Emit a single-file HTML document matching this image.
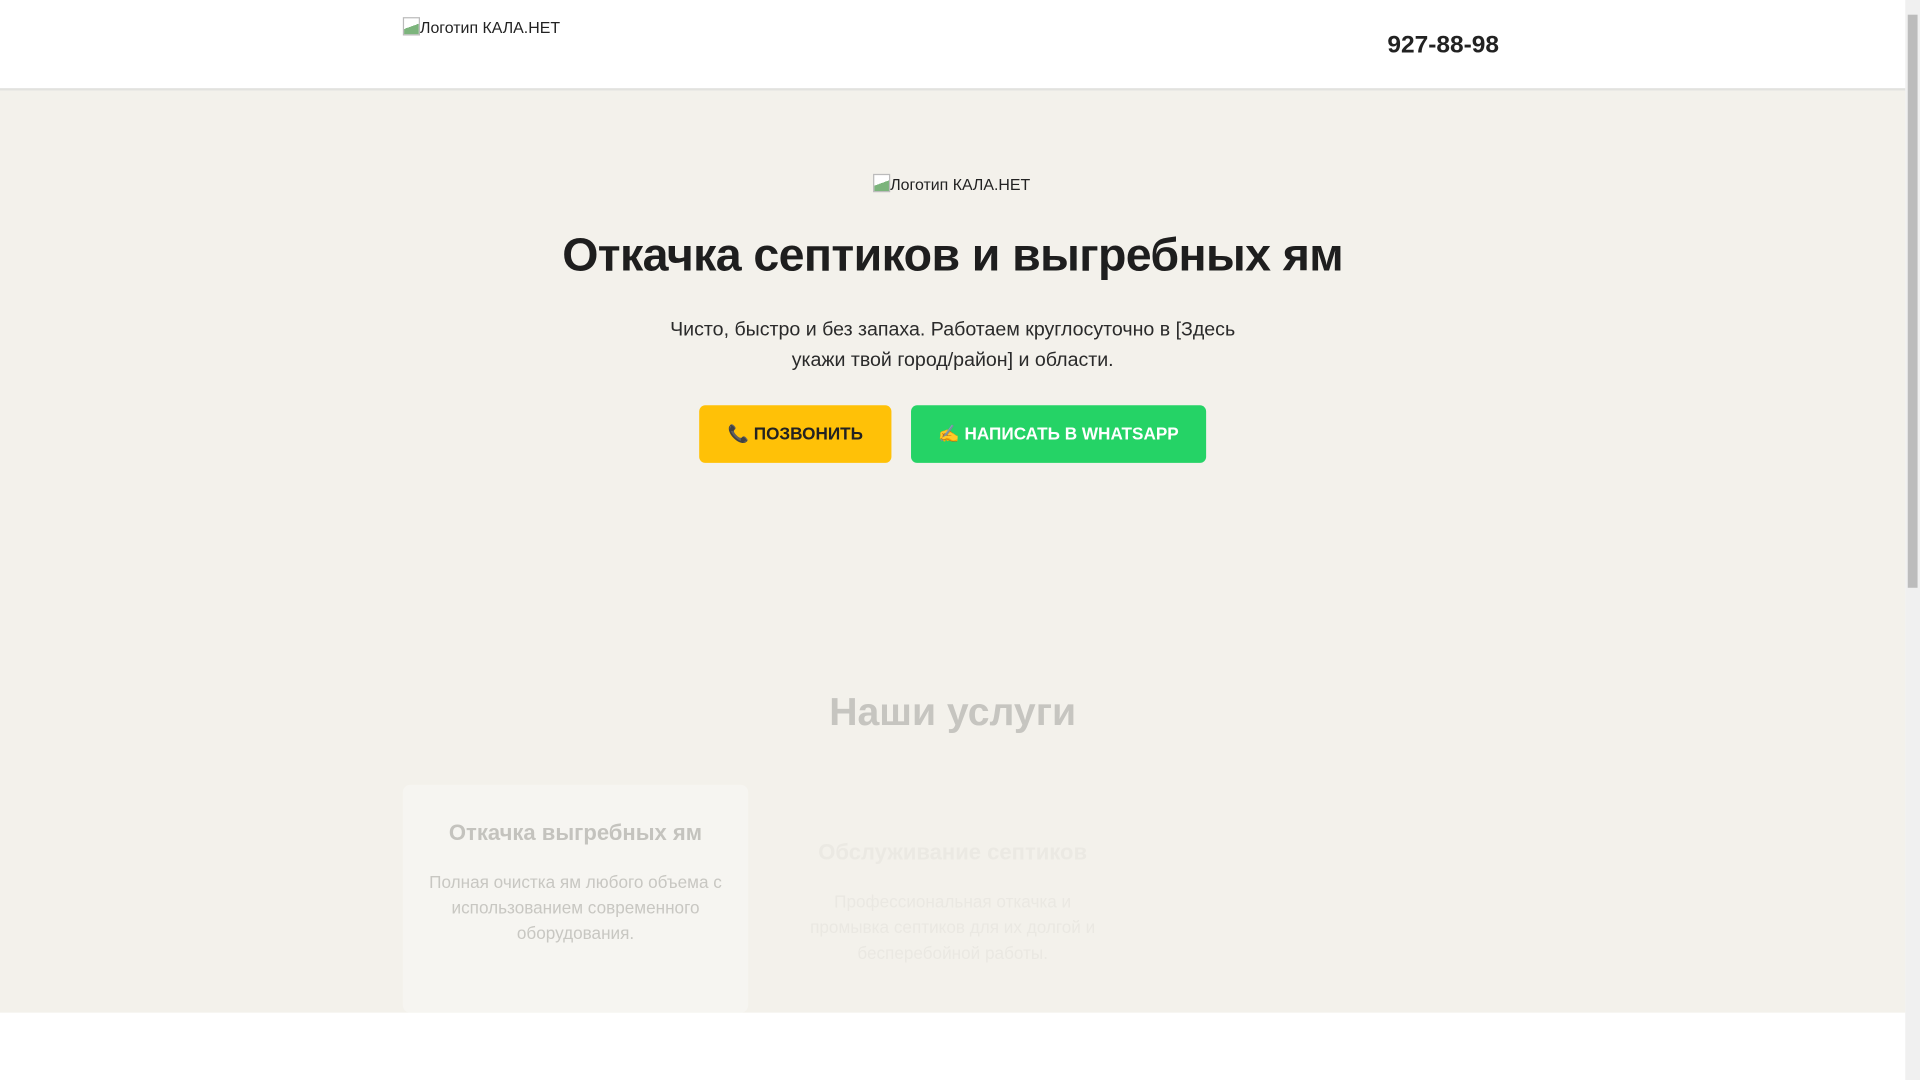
<!DOCTYPE html>
<html><head><meta charset="utf-8"><style>
html,body{margin:0;padding:0;width:1920px;height:1080px;overflow:hidden;background:#fff}
#w{position:absolute;left:0;top:0;width:1568px;height:882px;transform:scale(1.22449);transform-origin:0 0;font-family:"Liberation Sans",sans-serif;color:#222}
.hdr{position:absolute;left:0;top:0;width:1556px;height:72px;background:#fff;border-bottom:2px solid #e2e2de}
.logo{position:absolute;font-size:13px;color:#222;white-space:nowrap}
.logo i{display:inline-block;width:14px;height:15px;border:1px solid #bbb;vertical-align:-2px;background:linear-gradient(160deg,#fff 50%,#7cb47c 50%);box-sizing:border-box}
.phone{position:absolute;left:1133px;top:26px;font-size:20px;font-weight:bold;color:#222}
.hero{position:absolute;left:0;top:74px;width:1556px;height:753px;background:#f3f1eb}
.c{position:absolute;left:0;width:1556px;text-align:center}
h1{margin:0;font-size:38px;font-weight:bold;color:#1e1e1e;letter-spacing:-0.5px}
.sub{font-size:16px;line-height:25px;color:#2a2a2a}
.btn{position:absolute;top:331px;height:47px;border-radius:5px;font-weight:bold;font-size:14px;line-height:47px;text-align:center}
.card{position:absolute;left:329px;top:641px;width:282px;height:186px;background:#f6f5f1;border-radius:6px}
.sb{position:absolute;left:1556px;top:0;width:12px;height:882px;background:#f0f0f0}
.th{position:absolute;left:1558px;top:12px;width:8px;height:468px;background:#bcbcbc}
</style></head><body><div id="w">
<div class="hdr"></div>
<div class="logo" style="left:329px;top:14px"><i></i>Логотип КАЛА.НЕТ</div>
<div class="phone">927-88-98</div>
<div class="hero"></div>
<div class="logo" style="left:713px;top:142px"><i></i>Логотип КАЛА.НЕТ</div>
<div class="c" style="top:188px"><h1>Откачка септиков и выгребных ям</h1></div>
<div class="c sub" style="top:257px">Чисто, быстро и без запаха. Работаем круглосуточно в [Здесь<br>укажи твой город/район] и области.</div>
<div class="btn" style="left:571px;width:157px;background:#ffc107;color:#222">📞 ПОЗВОНИТЬ</div>
<div class="btn" style="left:744px;width:241px;background:#25d366;color:#fff">✍ НАПИСАТЬ В WHATSAPP</div>
<div class="c" style="top:563px;font-size:32px;font-weight:bold;color:#c6c5c0">Наши услуги</div>
<div class="card"></div>
<div style="position:absolute;left:329px;top:670px;width:282px;text-align:center;font-size:18px;font-weight:bold;color:#c4c3be">Откачка выгребных ям</div>
<div style="position:absolute;left:345px;top:710px;width:250px;text-align:center;font-size:14px;line-height:21px;color:#c8c7c2">Полная очистка ям любого объема с использованием современного оборудования.</div>
<div style="position:absolute;left:640px;top:686px;width:276px;text-align:center;font-size:18px;font-weight:bold;color:#ebe9e3">Обслуживание септиков</div>
<div style="position:absolute;left:655px;top:726px;width:246px;text-align:center;font-size:14px;line-height:21px;color:#eae8e2">Профессиональная откачка и промывка септиков для их долгой и бесперебойной работы.</div>
<div class="sb"></div><div class="th"></div>
</div></body></html>
